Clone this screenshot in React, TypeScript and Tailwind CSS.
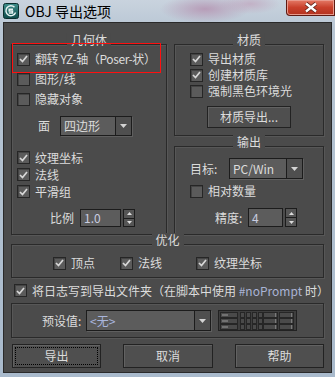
import React from "react";

const Check = ({ checked }: { checked?: boolean }) => (
  <span className="flex h-[13px] w-[13px] shrink-0 items-center justify-center border border-[#262626] bg-[#5b5b5b] shadow-[inset_1px_1px_0_#444]">
    {checked && (
      <svg width="9" height="8" viewBox="0 0 9 8">
        <path d="M1 4l2.5 2.5L8 1" fill="none" stroke="#d8d8d8" strokeWidth="1.7" />
      </svg>
    )}
  </span>
);

const CheckRow = ({
  label,
  checked,
  className = "",
}: {
  label: React.ReactNode;
  checked?: boolean;
  className?: string;
}) => (
  <div className={`flex items-center gap-[5px] whitespace-nowrap ${className}`}>
    <Check checked={checked} />
    <span>{label}</span>
  </div>
);

const Select = ({
  value,
  className = "",
  valueClass = "",
}: {
  value: React.ReactNode;
  className?: string;
  valueClass?: string;
}) => (
  <div className={`flex border border-[#1c1c1c] bg-[#5c5c5c] shadow-[1px_1px_0_#5f5f5f] ${className}`}>
    <span className={`flex flex-1 items-center pl-[3px] ${valueClass}`}>{value}</span>
    <span className="flex w-[16px] items-center justify-center border-l border-[#1c1c1c] bg-[#4f4f4f]">
      <svg width="7" height="4" viewBox="0 0 7 4">
        <path d="M0 0h7L3.5 4z" fill="#d4d4d4" />
      </svg>
    </span>
  </div>
);

const Spin = ({ value, inputClass }: { value: string; inputClass: string }) => (
  <div className="flex h-full items-stretch gap-[2px]">
    <div className={`flex items-center border border-[#1c1c1c] bg-[#5c5c5c] pl-[3px] text-[#c9cde0] ${inputClass}`}>
      {value}
    </div>
    <div className="flex w-[12px] flex-col border border-[#1c1c1c] bg-[#555]">
      <span className="flex flex-1 items-center justify-center border-b border-[#1c1c1c]">
        <svg width="5" height="3" viewBox="0 0 5 3">
          <path d="M0 3h5L2.5 0z" fill="#dcdcdc" />
        </svg>
      </span>
      <span className="flex flex-1 items-center justify-center">
        <svg width="5" height="3" viewBox="0 0 5 3">
          <path d="M0 0h5L2.5 3z" fill="#dcdcdc" />
        </svg>
      </span>
    </div>
  </div>
);

const Group = ({
  title,
  className = "",
  children,
}: {
  title?: string;
  className?: string;
  children?: React.ReactNode;
}) => (
  <div className={`relative border border-[#2a2a2a] shadow-[inset_1px_1px_0_#575757,1px_1px_0_#575757] ${className}`}>
    {title && (
      <span className="absolute left-1/2 top-[-12px] -translate-x-1/2 bg-[#4b4b4b] px-[4px] leading-[14px]">
        {title}
      </span>
    )}
    {children}
  </div>
);

const Btn = ({
  children,
  className = "",
  focus,
}: {
  children: React.ReactNode;
  className?: string;
  focus?: boolean;
}) => (
  <div className={`flex border border-[#222] bg-[#4f4f4f] p-[2px] shadow-[inset_1px_1px_0_#626262] ${className}`}>
    <span
      className={`flex flex-1 items-center justify-center border ${
        focus ? "border-dotted border-black" : "border-transparent"
      }`}
    >
      {children}
    </span>
  </div>
);

const PresetIcon = () => (
  <svg width="79" height="21" viewBox="0 0 79 21">
    <rect x="0.5" y="0.5" width="78" height="20" fill="#3e3e3e" stroke="#222" />
    {[2, 8, 14].map((y) => (
      <g key={y}>
        <rect x="2.5" y={y + 0.5} width="17" height="5" fill="#4a4a4a" stroke="#262626" />
        <rect x="4" y={y + 2.5} width="6" height="1" fill="#9a9a9a" />
        {[22, 28, 34, 40].map((x) => (
          <rect key={x} x={x + 0.5} y={y + 0.5} width="4" height="5" fill="#4a4a4a" stroke="#262626" />
        ))}
        <rect x="45.5" y={y + 0.5} width="14" height="5" fill="#4a4a4a" stroke="#262626" />
        <rect x="57" y={y + 1.5} width="1" height="1" fill="#aaa" />
        <rect x="57" y={y + 3.5} width="1" height="1" fill="#aaa" />
        <rect x="61.5" y={y + 0.5} width="14" height="5" fill="#4a4a4a" stroke="#262626" />
        <rect x="73" y={y + 1.5} width="1" height="1" fill="#aaa" />
        <rect x="73" y={y + 3.5} width="1" height="1" fill="#aaa" />
      </g>
    ))}
  </svg>
);

const MaxIcon = () => (
  <svg width="16" height="16" viewBox="0 0 16 16">
    <defs>
      <linearGradient id="mx" x1="0" y1="0" x2="0" y2="1">
        <stop offset="0" stopColor="#3f8f8c" />
        <stop offset="1" stopColor="#0e4a4a" />
      </linearGradient>
    </defs>
    <rect x="0.5" y="0.5" width="15" height="15" rx="2" fill="url(#mx)" stroke="#0b2e2e" />
    <path
      d="M11.5 4.2A5 5 0 1 0 12.6 9.5M10 6.2H6.2v1.9h3.3v1.9H5.8"
      fill="none"
      stroke="#e6f2f2"
      strokeWidth="1.5"
    />
  </svg>
);

export default function App() {
  return (
    <div className="relative flex h-[377px] w-[335px] flex-col overflow-hidden bg-[radial-gradient(ellipse_45px_14px_at_205px_9px,#b79db8,transparent),radial-gradient(ellipse_30px_10px_at_250px_4px,#c2b1c6,transparent),linear-gradient(to_bottom,#c9d3de,#b8c6d4_30px,#a9bacc)] font-['Noto_Sans_CJK_SC','Noto_Sans',sans-serif] text-[12px] leading-[14px] text-[#dcdcdc]">
      {/* title bar */}
      <div className="flex h-[22px] shrink-0 items-start">
        <div className="ml-[3px] mt-[3px]">
          <MaxIcon />
        </div>
        <span className="ml-[6px] mt-[2px] text-[14px] leading-[18px] text-black">OBJ 导出选项</span>
        <div className="ml-auto flex h-[16px] w-[49px] items-center justify-center rounded-bl-[4px] border border-t-0 border-[#5e1a12] bg-[linear-gradient(to_bottom,#e47a66,#c9402b_50%,#b3321f)] shadow-[inset_0_0_0_1px_#e99a8c]">
          <svg width="14" height="11" viewBox="0 0 14 11">
            <path d="M2 1.5l10 8M12 1.5l-10 8" stroke="#5a2018" strokeWidth="4" />
            <path d="M2 1.5l10 8M12 1.5l-10 8" stroke="#ffffff" strokeWidth="2.3" />
          </svg>
        </div>
      </div>

      {/* body */}
      <div className="mx-[3px] flex h-[351px] flex-col border border-[#2a2a2a] bg-[#4b4b4b] px-[7px] pt-[21px]">
        <div className="flex h-[191px] gap-[7px]">
          <Group title="几何体" className="w-[156px]">
            <div className="flex flex-col pl-[5px] pt-[4px]">
              <CheckRow
                checked
                label={<span className="tracking-[-0.4px]">翻转 YZ-轴（Poser-状）</span>}
                className="h-[20px]"
              />
              <CheckRow label="图形/线" className="h-[20px]" />
              <CheckRow label="隐藏对象" className="h-[20px]" />
            </div>
            <div className="mt-[7px] flex h-[20px] items-center pl-[26px]">
              <span>面</span>
              <Select value="四边形" className="ml-[10px] h-[20px] w-[72px]" />
            </div>
            <div className="mt-[13px] flex flex-col pl-[5px]">
              <CheckRow checked label="纹理坐标" className="h-[17px]" />
              <CheckRow checked label="法线" className="h-[17px]" />
              <CheckRow checked label="平滑组" className="h-[17px]" />
            </div>
            <div className="mt-[9px] flex h-[18px] items-center pl-[38px]">
              <span className="w-[30px]">比例</span>
              <Spin value="1.0" inputClass="w-[41px]" />
            </div>
          </Group>

          <div className="flex w-[150px] flex-col">
            <Group title="材质" className="h-[92px]">
              <div className="flex flex-col pl-[15px] pt-[6px]">
                <CheckRow checked label="导出材质" className="h-[16px]" />
                <CheckRow checked label="创建材质库" className="h-[16px]" />
                <CheckRow label="强制黑色环境光" className="h-[16px]" />
              </div>
              <Btn className="mx-auto mt-[7px] h-[22px] w-[84px]">材质导出...</Btn>
            </Group>
            <Group title="输出" className="mt-[10px] h-[89px]">
              <div className="mt-[11px] flex h-[21px] items-center pl-[15px]">
                <span className="w-[39px]">目标:</span>
                <Select value="PC/Win" className="h-[21px] w-[74px]" />
              </div>
              <CheckRow label="相对数量" className="mt-[3px] h-[18px] pl-[15px]" />
              <div className="mt-[8px] flex h-[19px] items-center pl-[40px]">
                <span className="w-[33px]">精度:</span>
                <Spin value="4" inputClass="w-[35px]" />
              </div>
            </Group>
          </div>
        </div>

        <Group title="优化" className="mt-[9px] h-[34px]">
          <div className="flex h-[32px] items-center pl-[41px] pt-[4px]">
            <CheckRow checked label="顶点" className="w-[67px]" />
            <CheckRow checked label="法线" className="w-[76px]" />
            <CheckRow checked label="纹理坐标" />
          </div>
        </Group>

        <CheckRow
          checked
          className="h-[25px] pl-[3px]"
          label={
            <>
              将日志写到导出文件夹（在脚本中使用 <span className="text-[#a9b3d4]">#noPrompt</span> 时）
            </>
          }
        />

        <Group className="h-[35px]">
          <div className="flex h-full items-center pl-[30px]">
            <span className="w-[44px]">预设值:</span>
            <Select value={"<无>"} valueClass="text-[#a9b5dc]" className="h-[21px] w-[125px]" />
            <div className="ml-[7px] flex">
              <PresetIcon />
            </div>
          </div>
        </Group>

        <div className="mt-[6px] flex h-[24px] justify-between pl-[1px]">
          <Btn focus className="w-[89px]">
            导出
          </Btn>
          <Btn className="w-[90px]">取消</Btn>
          <Btn className="w-[89px]">帮助</Btn>
        </div>
      </div>

      {/* highlight annotation */}
      <div className="pointer-events-none absolute left-[12px] top-[43px] h-[30px] w-[149px] border border-[#ff1010]" />
    </div>
  );
}
